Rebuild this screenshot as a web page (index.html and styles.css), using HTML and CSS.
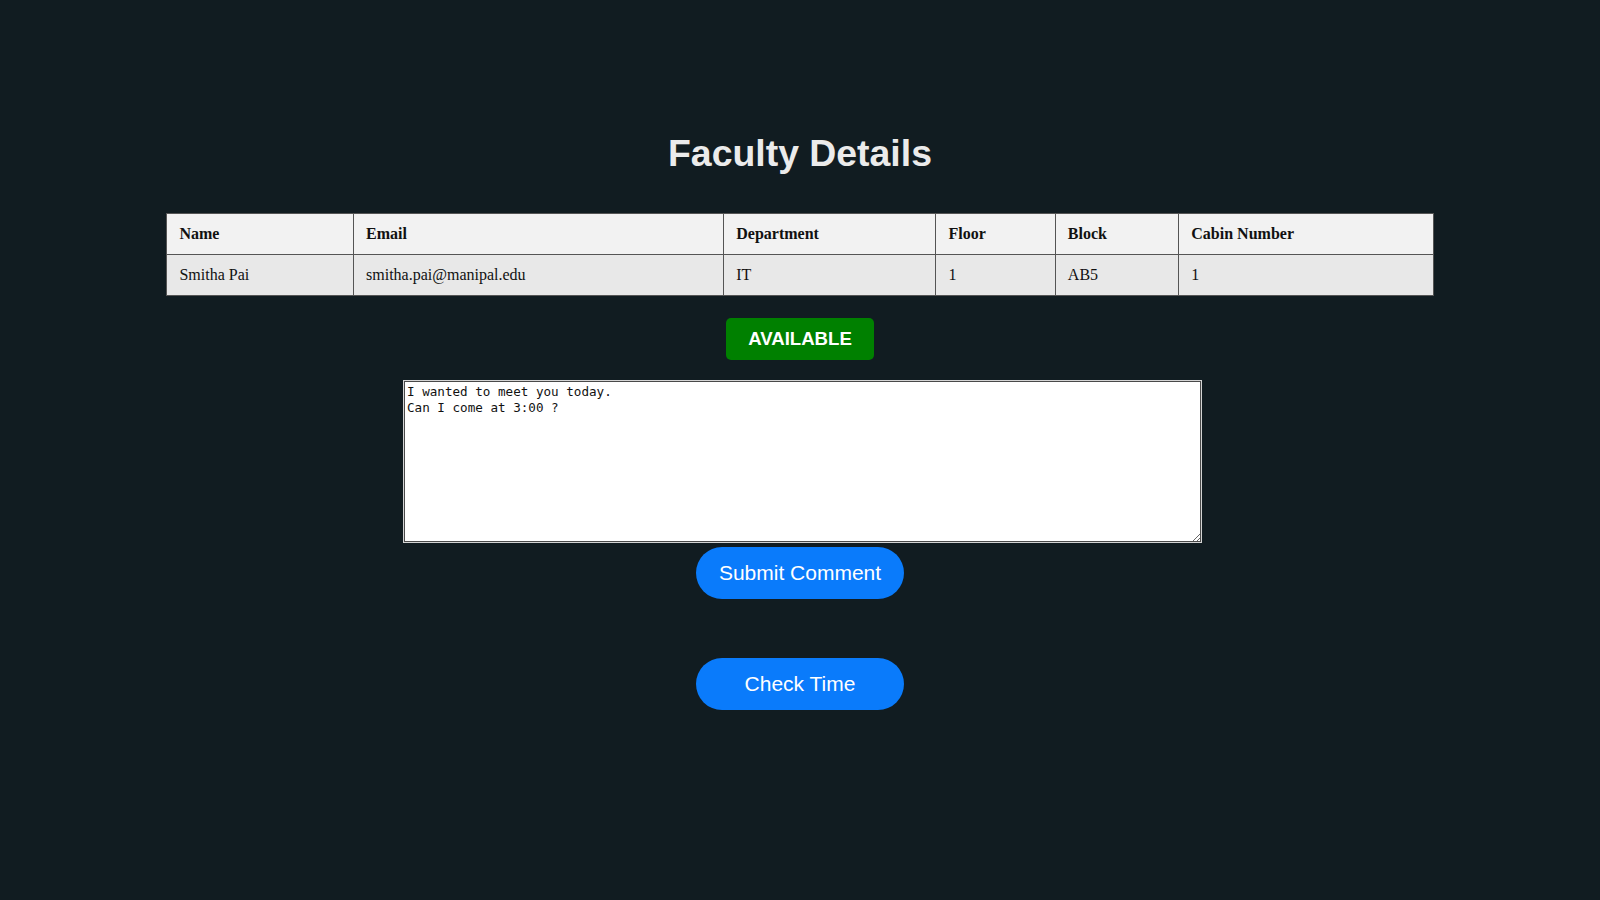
FILE: index.html
```html
<!DOCTYPE html>
<html lang="en">
<head>
<meta charset="utf-8">
<title>Faculty Details</title>
<link rel="stylesheet" href="styles.css">
</head>
<body>
<main class="page">
  <h1 class="title">Faculty Details</h1>
  <table class="faculty">
    <colgroup>
      <col class="c-name">
      <col class="c-email">
      <col class="c-dept">
      <col class="c-floor">
      <col class="c-block">
      <col class="c-cabin">
    </colgroup>
    <thead>
      <tr>
        <th>Name</th>
        <th>Email</th>
        <th>Department</th>
        <th>Floor</th>
        <th>Block</th>
        <th>Cabin Number</th>
      </tr>
    </thead>
    <tbody>
      <tr>
        <td>Smitha Pai</td>
        <td>smitha.pai@manipal.edu</td>
        <td>IT</td>
        <td>1</td>
        <td>AB5</td>
        <td>1</td>
      </tr>
    </tbody>
  </table>
  <div class="status">AVAILABLE</div>
  <textarea class="comment">I wanted to meet you today.
Can I come at 3:00 ?</textarea>
  <button class="pill submit" type="button">Submit Comment</button>
  <button class="pill check" type="button">Check Time</button>
</main>
</body>
</html>
```

FILE: styles.css
```css
html, body {
  margin: 0;
  padding: 0;
  background: #111c21;
}

.page {
  display: flex;
  flex-direction: column;
  align-items: center;
  padding: 133px 8px 0;
  font-family: "Liberation Sans", Arial, sans-serif;
}

.title {
  margin: 0 0 39px;
  font-size: 37.4px;
  line-height: 41px;
  font-weight: bold;
  color: #ebebeb;
}

.faculty {
  width: 80%;
  table-layout: fixed;
  border-collapse: collapse;
  font-family: "Liberation Serif", "Times New Roman", serif;
  font-size: 16px;
  color: #111;
  border: 1px solid #4a4a4a;
}

.c-name { width: 14.74%; }
.c-email { width: 29.24%; }
.c-dept { width: 16.76%; }
.c-floor { width: 9.43%; }
.c-block { width: 9.75%; }
.c-cabin { width: 20.08%; }

.faculty th,
.faculty td {
  border: 1px solid #555;
  padding: 11px 12px;
  text-align: left;
  line-height: 18px;
}

.faculty th {
  background: #f2f2f2;
  font-weight: bold;
}

.faculty td {
  background: #e8e8e8;
}

.status {
  margin-top: 22px;
  padding: 10px 22px;
  background: #008000;
  color: #fff;
  font-weight: bold;
  font-size: 18.6px;
  line-height: 22px;
  border-radius: 5px;
}

.comment {
  margin: 20px 0 0 5px;
  box-sizing: border-box;
  width: 799px;
  height: 163px;
  padding: 3px;
  border: 1px solid #d4d4d4;
  box-shadow: inset 0 0 0 1px #4a4a4a;
  background: #fff;
  color: #111;
  font-family: "DejaVu Sans Mono", "Liberation Mono", monospace;
  font-size: 12.6px;
  line-height: 15.7px;
  resize: both;
  outline: none;
}

.pill {
  box-sizing: border-box;
  width: 208px;
  height: 52px;
  padding: 0;
  border: none;
  border-radius: 26px;
  background: #0a7bfb;
  color: #fff;
  font-family: "Liberation Sans", Arial, sans-serif;
  font-size: 21px;
  line-height: 24px;
  cursor: pointer;
}

.submit {
  margin-top: 4px;
}

.check {
  margin-top: 59px;
}
```
